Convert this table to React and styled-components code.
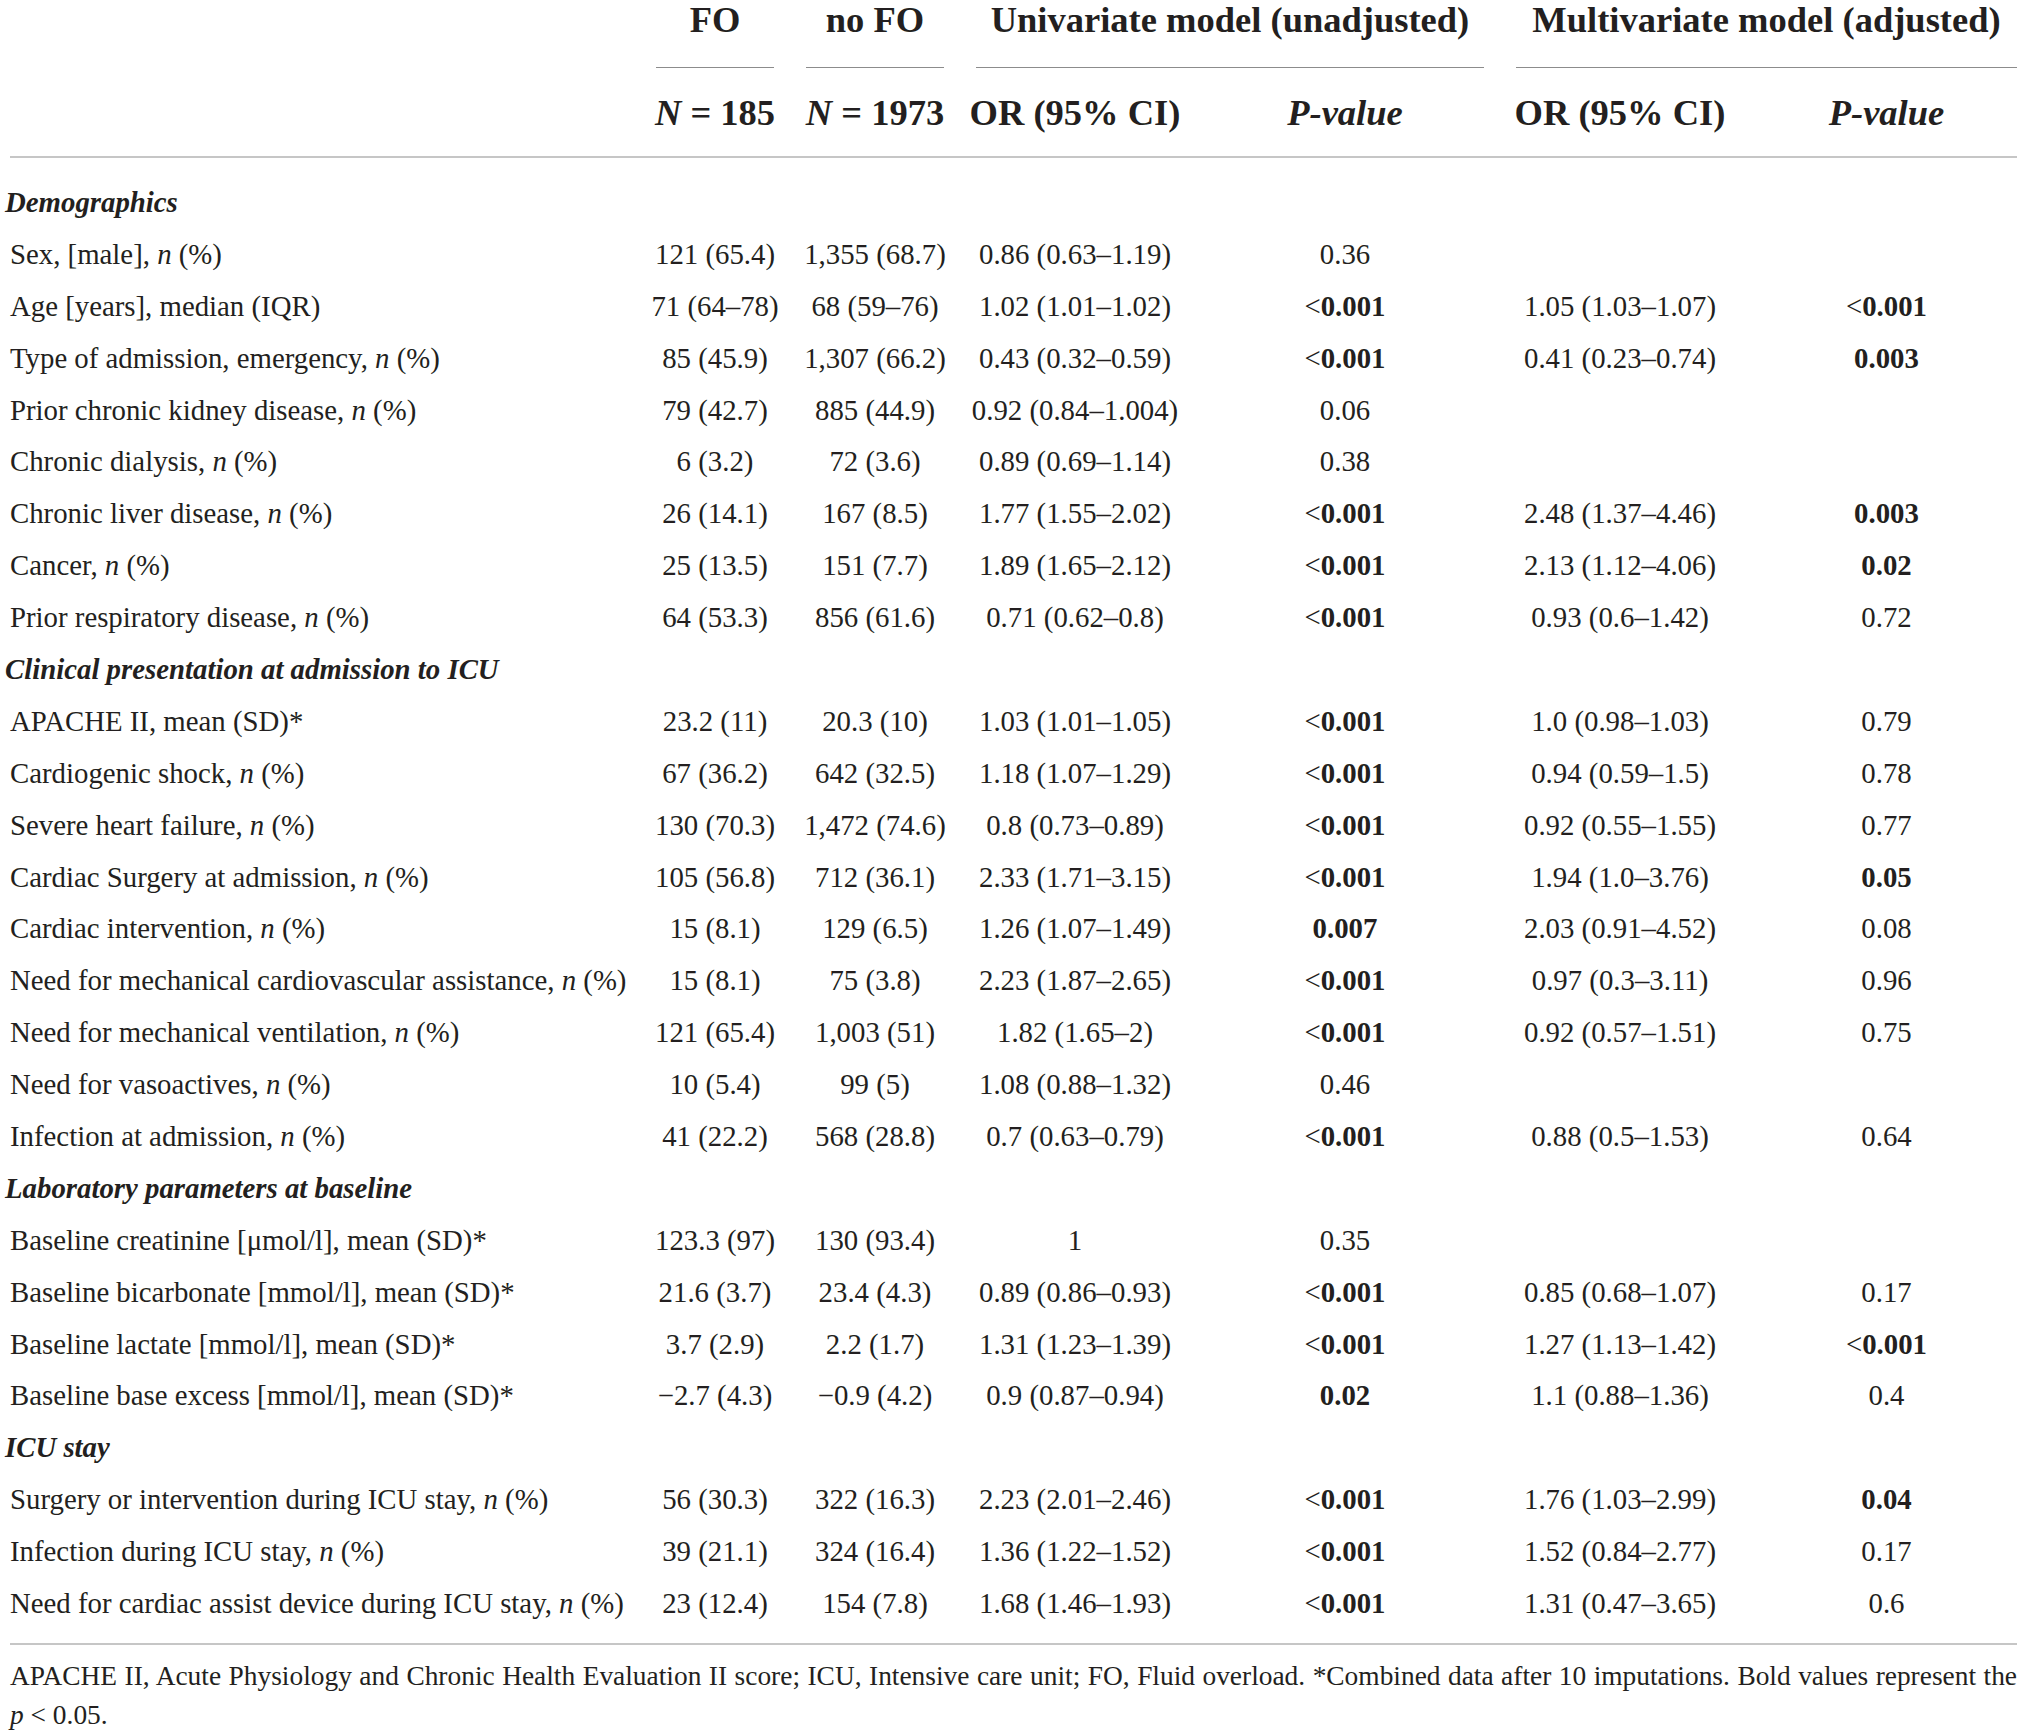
import React from 'react';
import styled, { createGlobalStyle } from 'styled-components';

const COLS = '630px 150px 170px 230px 310px 240px 277px';

const GlobalStyle = createGlobalStyle`
    html, body {
        margin: 0;
        padding: 0;
        background: #ffffff;
    }
    body {
        font-family: "Liberation Serif", "Times New Roman", serif;
        color: #231f20;
    }
`;

const Page = styled.div`
    width: 2007px;
    padding: 0 6px 0 10px;
`;

const HeadRow = styled.div`
    display: grid;
    grid-template-columns: ${COLS};
    font-size: 36.5px;
    font-weight: bold;
    line-height: 40px;
`;

const SpanCell = styled.div`
    grid-column: span ${({ $span }) => $span || 1};
    padding: ${({ $last }) => ($last ? '0 0 0 16px' : '0 16px')};
`;

const SpanLabel = styled.div`
    text-align: center;
    padding-bottom: 27px;
    border-bottom: 1.5px solid #8c8c8c;
    white-space: nowrap;
`;

const SubHeadRow = styled(HeadRow)`
    padding: 25px 0 23px;
    border-bottom: 2px solid #c6c6c6;
`;

const HeadCell = styled.div`
    text-align: center;
    white-space: nowrap;
    padding-left: ${({ $last }) => ($last ? '16px' : '0')};
`;

const Body = styled.div`
    padding: 18px 0 14px;
    border-bottom: 2px solid #c6c6c6;
`;

const Row = styled.div`
    display: grid;
    grid-template-columns: ${COLS};
    height: 51.9px;
    align-items: center;
    font-size: 28.8px;
    line-height: 34px;
`;

const SectionTitle = styled.div`
    grid-column: 1 / -1;
    margin-left: -5px;
    font-style: italic;
    font-weight: bold;
    white-space: nowrap;
`;

const Label = styled.div`
    white-space: nowrap;
`;

const Value = styled.div`
    text-align: center;
    white-space: nowrap;
    padding-left: ${({ $last }) => ($last ? '16px' : '0')};
`;

const Footnote = styled.p`
    margin: 12px 0 0;
    font-size: 27.4px;
    line-height: 39px;
    text-align: justify;
    text-align-last: ${({ $full }) => ($full ? 'justify' : 'left')};
`;

const FootnoteEnd = styled(Footnote)`
    margin-top: 0;
`;

const sections = [
    {
        title: 'Demographics',
        rows: [
            ['Sex, [male]', true, '121 (65.4)', '1,355 (68.7)', '0.86 (0.63–1.19)', '0.36', '', ''],
            ['Age [years], median (IQR)', false, '71 (64–78)', '68 (59–76)', '1.02 (1.01–1.02)', '<0.001*', '1.05 (1.03–1.07)', '<0.001*'],
            ['Type of admission, emergency', true, '85 (45.9)', '1,307 (66.2)', '0.43 (0.32–0.59)', '<0.001*', '0.41 (0.23–0.74)', '0.003*'],
            ['Prior chronic kidney disease', true, '79 (42.7)', '885 (44.9)', '0.92 (0.84–1.004)', '0.06', '', ''],
            ['Chronic dialysis', true, '6 (3.2)', '72 (3.6)', '0.89 (0.69–1.14)', '0.38', '', ''],
            ['Chronic liver disease', true, '26 (14.1)', '167 (8.5)', '1.77 (1.55–2.02)', '<0.001*', '2.48 (1.37–4.46)', '0.003*'],
            ['Cancer', true, '25 (13.5)', '151 (7.7)', '1.89 (1.65–2.12)', '<0.001*', '2.13 (1.12–4.06)', '0.02*'],
            ['Prior respiratory disease', true, '64 (53.3)', '856 (61.6)', '0.71 (0.62–0.8)', '<0.001*', '0.93 (0.6–1.42)', '0.72'],
        ],
    },
    {
        title: 'Clinical presentation at admission to ICU',
        rows: [
            ['APACHE II, mean (SD)*', false, '23.2 (11)', '20.3 (10)', '1.03 (1.01–1.05)', '<0.001*', '1.0 (0.98–1.03)', '0.79'],
            ['Cardiogenic shock', true, '67 (36.2)', '642 (32.5)', '1.18 (1.07–1.29)', '<0.001*', '0.94 (0.59–1.5)', '0.78'],
            ['Severe heart failure', true, '130 (70.3)', '1,472 (74.6)', '0.8 (0.73–0.89)', '<0.001*', '0.92 (0.55–1.55)', '0.77'],
            ['Cardiac Surgery at admission', true, '105 (56.8)', '712 (36.1)', '2.33 (1.71–3.15)', '<0.001*', '1.94 (1.0–3.76)', '0.05*'],
            ['Cardiac intervention', true, '15 (8.1)', '129 (6.5)', '1.26 (1.07–1.49)', '0.007*', '2.03 (0.91–4.52)', '0.08'],
            ['Need for mechanical cardiovascular assistance', true, '15 (8.1)', '75 (3.8)', '2.23 (1.87–2.65)', '<0.001*', '0.97 (0.3–3.11)', '0.96'],
            ['Need for mechanical ventilation', true, '121 (65.4)', '1,003 (51)', '1.82 (1.65–2)', '<0.001*', '0.92 (0.57–1.51)', '0.75'],
            ['Need for vasoactives', true, '10 (5.4)', '99 (5)', '1.08 (0.88–1.32)', '0.46', '', ''],
            ['Infection at admission', true, '41 (22.2)', '568 (28.8)', '0.7 (0.63–0.79)', '<0.001*', '0.88 (0.5–1.53)', '0.64'],
        ],
    },
    {
        title: 'Laboratory parameters at baseline',
        rows: [
            ['Baseline creatinine [μmol/l], mean (SD)*', false, '123.3 (97)', '130 (93.4)', '1', '0.35', '', ''],
            ['Baseline bicarbonate [mmol/l], mean (SD)*', false, '21.6 (3.7)', '23.4 (4.3)', '0.89 (0.86–0.93)', '<0.001*', '0.85 (0.68–1.07)', '0.17'],
            ['Baseline lactate [mmol/l], mean (SD)*', false, '3.7 (2.9)', '2.2 (1.7)', '1.31 (1.23–1.39)', '<0.001*', '1.27 (1.13–1.42)', '<0.001*'],
            ['Baseline base excess [mmol/l], mean (SD)*', false, '−2.7 (4.3)', '−0.9 (4.2)', '0.9 (0.87–0.94)', '0.02*', '1.1 (0.88–1.36)', '0.4'],
        ],
    },
    {
        title: 'ICU stay',
        rows: [
            ['Surgery or intervention during ICU stay', true, '56 (30.3)', '322 (16.3)', '2.23 (2.01–2.46)', '<0.001*', '1.76 (1.03–2.99)', '0.04*'],
            ['Infection during ICU stay', true, '39 (21.1)', '324 (16.4)', '1.36 (1.22–1.52)', '<0.001*', '1.52 (0.84–2.77)', '0.17'],
            ['Need for cardiac assist device during ICU stay', true, '23 (12.4)', '154 (7.8)', '1.68 (1.46–1.93)', '<0.001*', '1.31 (0.47–3.65)', '0.6'],
        ],
    },
];

// p-values ending in * are the bold (p < 0.05) ones; a leading "<" stays regular
const PValue = ({ value }) => {
    if (!value.endsWith('*')) return value;
    const raw = value.slice(0, -1);
    if (raw.startsWith('<')) {
        return (
            <>
                {'<'}
                <b>{raw.slice(1)}</b>
            </>
        );
    }
    return <b>{raw}</b>;
};

const DataRow = ({ row }) => {
    const [label, withN, fo, noFo, uOr, uP, mOr, mP] = row;
    return (
        <Row>
            <Label>
                {withN ? (
                    <>
                        {label}, <i>n</i> (%)
                    </>
                ) : (
                    label
                )}
            </Label>
            <Value>{fo}</Value>
            <Value>{noFo}</Value>
            <Value>{uOr}</Value>
            <Value>
                <PValue value={uP} />
            </Value>
            <Value>{mOr}</Value>
            <Value $last>
                <PValue value={mP} />
            </Value>
        </Row>
    );
};

const App = () => {
    return (
        <Page>
            <GlobalStyle />
            <HeadRow>
                <div />
                <SpanCell>
                    <SpanLabel>FO</SpanLabel>
                </SpanCell>
                <SpanCell>
                    <SpanLabel>no FO</SpanLabel>
                </SpanCell>
                <SpanCell $span={2}>
                    <SpanLabel>Univariate model (unadjusted)</SpanLabel>
                </SpanCell>
                <SpanCell $span={2} $last>
                    <SpanLabel>Multivariate model (adjusted)</SpanLabel>
                </SpanCell>
            </HeadRow>
            <SubHeadRow>
                <div />
                <HeadCell>
                    <i>N</i> = 185
                </HeadCell>
                <HeadCell>
                    <i>N</i> = 1973
                </HeadCell>
                <HeadCell>OR (95% CI)</HeadCell>
                <HeadCell>
                    <i>P-value</i>
                </HeadCell>
                <HeadCell>OR (95% CI)</HeadCell>
                <HeadCell $last>
                    <i>P-value</i>
                </HeadCell>
            </SubHeadRow>
            <Body>
                {sections.map((section) => (
                    <React.Fragment key={section.title}>
                        <Row>
                            <SectionTitle>{section.title}</SectionTitle>
                        </Row>
                        {section.rows.map((row) => (
                            <DataRow key={row[0]} row={row} />
                        ))}
                    </React.Fragment>
                ))}
            </Body>
            <Footnote $full>
                APACHE II, Acute Physiology and Chronic Health Evaluation II score; ICU, Intensive care unit; FO, Fluid
                overload. *Combined data after 10 imputations. Bold values represent the
            </Footnote>
            <FootnoteEnd>
                <i>p</i> &lt; 0.05.
            </FootnoteEnd>
        </Page>
    );
};

export default App;
